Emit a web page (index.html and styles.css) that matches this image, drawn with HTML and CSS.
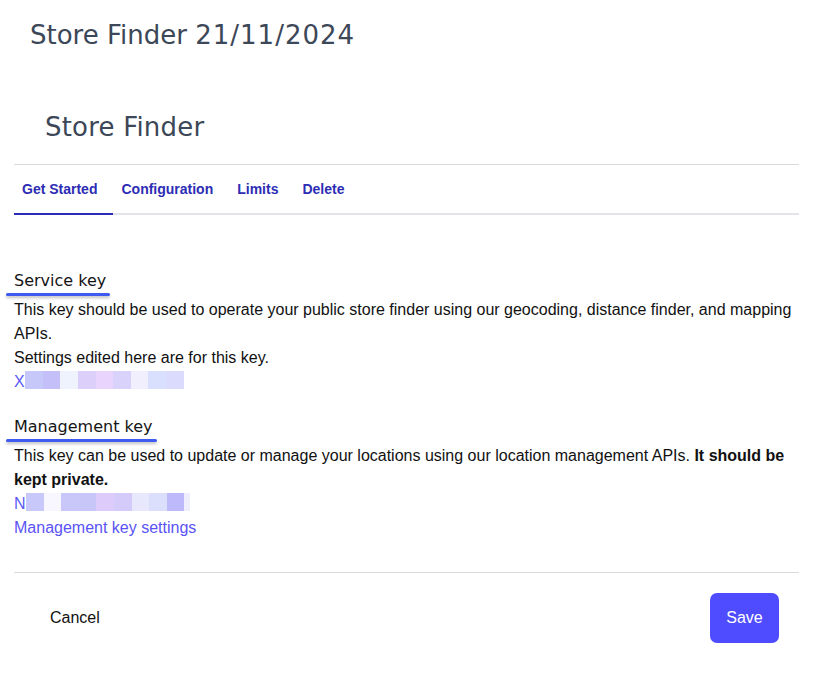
FILE: index.html
```html
<!DOCTYPE html>
<html lang="en">
<head>
<meta charset="utf-8">
<title>Store Finder</title>
<link rel="stylesheet" href="styles.css">
</head>
<body>
<div class="page">
  <h1 class="page-title">Store Finder <span class="date">21/11/2024</span></h1>
  <div class="panel">
    <h2 class="panel-title">Store Finder</h2>
    <nav class="tabs">
      <a class="tab active">Get Started</a>
      <a class="tab">Configuration</a>
      <a class="tab">Limits</a>
      <a class="tab">Delete</a>
    </nav>
    <div class="content">
      <section class="key-section">
        <h3 class="key-heading">Service key</h3>
        <p class="text">This key should be used to operate your public store finder using our geocoding, distance finder, and mapping APIs.</p>
        <p class="text">Settings edited here are for this key.</p>
        <div class="key">
          <span class="key-char">X</span>
          <span class="blk s1"></span><span class="blk s2"></span><span class="blk s3"></span><span class="blk s4"></span><span class="blk s5"></span><span class="blk s6"></span><span class="blk s7"></span><span class="blk s8"></span><span class="blk s9"></span>
        </div>
      </section>
      <section class="key-section second">
        <h3 class="key-heading">Management key</h3>
        <p class="text">This key can be used to update or manage your locations using our location management APIs. <strong>It should be kept private.</strong></p>
        <div class="key">
          <span class="key-char">N</span>
          <span class="blk m1"></span><span class="blk m2"></span><span class="blk m3"></span><span class="blk m4"></span><span class="blk m5"></span><span class="blk m6"></span><span class="blk m7"></span><span class="blk m8"></span><span class="blk m9"></span><span class="blk m10"></span>
        </div>
        <a class="link">Management key settings</a>
      </section>
    </div>
    <footer class="actions">
      <button class="btn-cancel">Cancel</button>
      <button class="btn-save">Save</button>
    </footer>
  </div>
</div>
</body>
</html>
```

FILE: styles.css
```css
* { box-sizing: border-box; }
html, body { margin: 0; padding: 0; background: #fff; }
body { font-family: "Liberation Sans", Arial, sans-serif; color: #111; }

.page { padding: 0 33px 0 14px; }

.page-title {
  margin: 20px 0 0 16px;
  font-family: "DejaVu Sans", Verdana, sans-serif;
  font-weight: normal;
  font-size: 26px;
  line-height: 30px;
  color: #3c4757;
}
.page-title .date { letter-spacing: 1px; }

.panel-title {
  margin: 62px 0 0 31px;
  font-family: "DejaVu Sans", Verdana, sans-serif;
  font-weight: normal;
  font-size: 26px;
  line-height: 30px;
  letter-spacing: 0.2px;
  color: #3c4757;
}

.tabs {
  margin-top: 22px;
  display: flex;
  border-top: 1px solid #dadada;
  border-bottom: 2px solid #e3e3ea;
}
.tab {
  height: 50px;
  margin-bottom: -2px;
  padding: 0 16px 0 8px;
  display: flex;
  align-items: center;
  font-weight: bold;
  font-size: 14px;
  color: #2c2cb4;
  border-bottom: 2px solid transparent;
  cursor: pointer;
}
.tab.active { border-bottom-color: #2a2ab6; }

.content { padding-top: 56px; }
.key-section { display: flex; flex-direction: column; align-items: flex-start; }
.key-section.second { margin-top: 23px; }

.key-heading {
  position: relative;
  margin: 0 0 7px 0;
  font-family: "DejaVu Sans", Verdana, sans-serif;
  font-weight: normal;
  font-size: 16px;
  line-height: 20px;
  color: #151515;
}
.key-heading::after {
  content: "";
  position: absolute;
  left: -8px;
  right: -4px;
  top: calc(100% + 2px);
  height: 3px;
  border-radius: 2px;
  background: #3f5af0;
  box-shadow: 0 2px 3px rgba(0,0,0,0.25);
}

.text {
  margin: 0;
  font-size: 16px;
  line-height: 24px;
  color: #111;
}
.text strong { font-weight: bold; }

.key {
  display: flex;
  align-items: flex-start;
  height: 24px;
  font-size: 16px;
  line-height: 24px;
}
.key-char { color: #5d5af6; }
.blk { display: inline-block; width: 17.6px; height: 18px; margin-top: 1px; }
.s1 { background: #c5c8f9; margin-left: 0.5px; }
.s2 { background: #c4bff8; }
.s3 { background: #eef3fe; }
.s4 { background: #dcd0fb; }
.s5 { background: #e8d4fd; }
.s6 { background: #d9d3fb; }
.s7 { background: #f1effd; }
.s8 { background: #d8e0fd; }
.s9 { background: #dadbfd; }
.m1 { background: #c8c8fa; margin-left: 0.5px; }
.m2 { background: #f8f6fe; }
.m3 { background: #c9c7f9; }
.m4 { background: #c8c5f9; }
.m5 { background: #dccbfb; }
.m6 { background: #d4cbfa; }
.m7 { background: #e8e8fd; }
.m8 { background: #dcdffc; }
.m9 { background: #bdb9fa; }
.m10 { background: #eeeefd; width: 6px; }

.link {
  font-size: 16px;
  line-height: 24px;
  color: #5a53f5;
  cursor: pointer;
}

.actions {
  margin-top: 32px;
  border-top: 1px solid #dadada;
  padding: 20px 20px 0 36px;
  display: flex;
  justify-content: space-between;
  align-items: center;
}
.btn-cancel {
  border: 0;
  background: none;
  padding: 0;
  font-family: "Liberation Sans", Arial, sans-serif;
  font-size: 16px;
  color: #111;
}
.btn-save {
  border: 0;
  height: 50px;
  width: 69px;
  border-radius: 7px;
  background: #4f4cff;
  color: #fff;
  font-family: "Liberation Sans", Arial, sans-serif;
  font-size: 16px;
}
```
